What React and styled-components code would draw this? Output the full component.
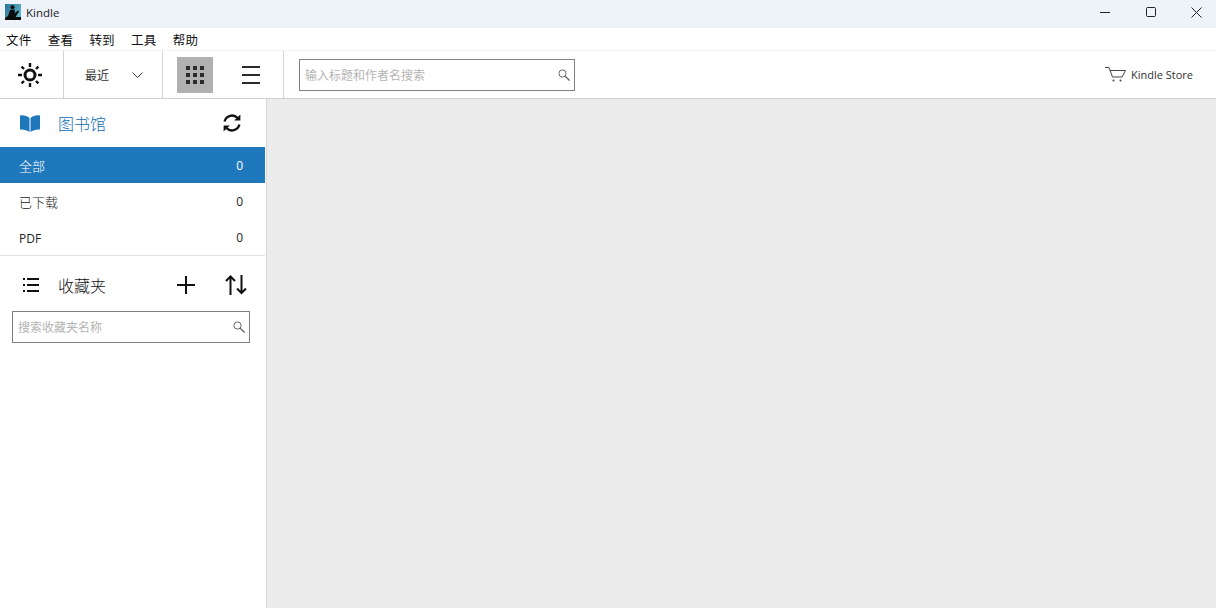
import React from 'react';
import styled, { createGlobalStyle } from 'styled-components';

const FONT = '"Open Sans", "Noto Sans CJK SC", sans-serif';

const GlobalStyle = createGlobalStyle`
  html, body {
    margin: 0;
    padding: 0;
    height: 100%;
    overflow: hidden;
    background: #fff;
  }
  * { box-sizing: border-box; }
  #root { height: 100%; }
`;

const Window = styled.div`
  width: 1216px;
  height: 608px;
  display: flex;
  flex-direction: column;
  font-family: ${FONT};
  color: #1a1a1a;
  background: #fff;
`;

const TitleBar = styled.div`
  height: 28px;
  flex: none;
  display: flex;
  align-items: center;
  background: #eef2f9;
  padding: 0 0 4px 5px;
`;

const AppName = styled.span`
  font-size: 11.5px;
  margin-left: 5px;
  color: #222;
`;

const WindowControls = styled.div`
  margin-left: auto;
  display: flex;
  gap: 5.5px;
  height: 100%;
`;

const WindowButton = styled.div`
  width: 40px;
  height: 100%;
  display: flex;
  align-items: center;
  justify-content: center;
  svg { display: block; }
`;

const MenuBar = styled.div`
  height: 23px;
  flex: none;
  display: flex;
  align-items: center;
  padding: 0 0 0 6px;
  gap: 16.3px;
  border-bottom: 1px solid #f0f0f0;
`;

const MenuItem = styled.span`
  font-size: 12.5px;
  color: #111;
  letter-spacing: 0.2px;
`;

const Toolbar = styled.div`
  height: 48px;
  flex: none;
  display: flex;
  align-items: center;
  border-bottom: 1px solid #d0d0d0;
`;

const ToolCell = styled.div`
  height: 100%;
  width: ${p => p.$width}px;
  flex: none;
  display: flex;
  align-items: center;
  justify-content: ${p => p.$justify || 'center'};
  padding-right: ${p => p.$inset || 0}px;
  border-right: 1px solid #d4d4d4;
`;

const SortLabel = styled.span`
  font-size: 12px;
  color: #333;
  margin-left: 21px;
  margin-right: 23px;
`;

const ViewButton = styled.div`
  width: 36px;
  height: 36px;
  margin-left: ${p => p.$offset}px;
  background: ${p => (p.$active ? '#b0b0b0' : 'transparent')};
  display: flex;
  align-items: center;
  justify-content: center;
`;

const SearchBox = styled.div`
  width: ${p => p.$width}px;
  height: 32px;
  flex: none;
  display: flex;
  align-items: center;
  justify-content: space-between;
  border: 1px solid #808080;
  padding: 0 4px 0 5px;
  background: #fff;
`;

const SearchHint = styled.span`
  font-size: 12px;
  color: #b4b4b4;
`;

const TopSearch = styled.div`
  margin-left: 15px;
`;

const Store = styled.div`
  margin-left: auto;
  margin-right: 23px;
  display: flex;
  align-items: center;
  gap: 5px;
  font-size: 11px;
  color: #333;
`;

const Body = styled.div`
  flex: 1;
  min-height: 0;
  display: flex;
`;

const Sidebar = styled.aside`
  width: 267px;
  flex: none;
  border-right: 1px solid #d8d8d8;
  padding-right: 1px;
  background: #fff;
  display: flex;
  flex-direction: column;
`;

const LibraryHeader = styled.div`
  height: 48px;
  display: flex;
  align-items: center;
  padding: 0 24px 0 20px;
`;

const HeaderTitle = styled.span`
  font-size: 16px;
  font-weight: 300;
  margin-left: ${p => p.$gap}px;
  color: ${p => p.$color};
`;

const HeaderEnd = styled.div`
  margin-left: auto;
  display: flex;
  align-items: center;
  gap: ${p => p.$gap || 0}px;
`;

const CategoryRow = styled.div`
  height: 36px;
  display: flex;
  align-items: center;
  justify-content: space-between;
  padding: 1px 22px 0 19px;
  font-size: 12px;
  background: ${p => (p.$selected ? '#1f78bc' : 'transparent')};
  color: ${p => (p.$selected ? '#fff' : '#222')};
`;

const CategoryName = styled.span`
  font-size: ${p => (p.$latin ? 12 : 13)}px;
  font-weight: ${p => (p.$latin ? 400 : 300)};
  padding-top: ${p => (p.$latin ? 1 : 0)}px;
`;

const Divider = styled.div`
  height: 1px;
  background: #e0e0e0;
`;

const CollectionHeader = styled.div`
  height: 55px;
  display: flex;
  align-items: center;
  padding: 2px 18px 0 23px;
`;

const CollectionSearch = styled.div`
  padding-left: 12px;
`;

const Main = styled.main`
  flex: 1;
  background: #ececec;
`;

const KindleLogo = () => (
  <svg width="16" height="16" viewBox="0 0 16 16">
    <defs>
      <linearGradient id="sky" x1="0" y1="0" x2="1" y2="0.6">
        <stop offset="0" stopColor="#2a6f96" />
        <stop offset="1" stopColor="#5fb4c8" />
      </linearGradient>
    </defs>
    <rect width="16" height="16" fill="url(#sky)" />
    <circle cx="7.5" cy="3.2" r="2" fill="#0b0b0b" />
    <path d="M5 6L9.5 5.5 10 9 13 6.5 14 7.5 10.5 13H16V16H0V14L3 12Z" fill="#0b0b0b" />
  </svg>
);

const SunIcon = () => (
  <svg width="24" height="24" viewBox="0 0 24 24" fill="none" stroke="#111" strokeWidth="2.4">
    <circle cx="12" cy="12" r="5" strokeWidth="3" />
    <path d="M12 0v4M12 20v4M0 12h4M20 12h4M3.6 3.6L6 6M18 18l2.4 2.4M3.6 20.4L6 18M18 6l2.4-2.4" />
  </svg>
);

const Chevron = () => (
  <svg width="11" height="6" viewBox="0 0 11 6" fill="none" stroke="#333" strokeWidth="1">
    <path d="M.5.5l5 5 5-5" />
  </svg>
);

const GridIcon = () => (
  <svg width="18" height="18" viewBox="0 0 18 18" fill="#2b2b2b">
    {[0, 7, 14].map(y =>
      [0, 7, 14].map(x => <rect key={`${x}-${y}`} x={x} y={y} width="4" height="4" />)
    )}
  </svg>
);

const ListIcon = () => (
  <svg width="18" height="18" viewBox="0 0 18 18" fill="#2b2b2b">
    <rect y="0" width="18" height="2" />
    <rect y="8" width="18" height="2" />
    <rect y="16" width="18" height="2" />
  </svg>
);

const SearchIcon = () => (
  <svg width="12" height="12" viewBox="0 0 12 12" fill="none" stroke="#666">
    <circle cx="4.5" cy="4.5" r="3.6" />
    <path d="M7.2 7.2L11.6 11.6" strokeWidth="1.3" />
  </svg>
);

const CartIcon = () => (
  <svg width="21" height="15" viewBox="0 0 21 15" fill="none" stroke="#444" strokeWidth="1">
    <path d="M0 .5h4l3.5 9.5h9.5L20.5 3.5H5" />
    <circle cx="8.5" cy="13.5" r="1" fill="#444" stroke="none" />
    <circle cx="15.5" cy="13.5" r="1" fill="#444" stroke="none" />
  </svg>
);

const BookIcon = () => (
  <svg width="20" height="17" viewBox="0 0 20 17" fill="#1f78bc">
    <path d="M0 .5C3.5 0 7 .8 9.5 3v14C7 15 3.5 14.2 0 14.5z" />
    <path d="M20 .5C16.5 0 13 .8 10.5 3v14c2.5-2 6-2.8 9.5-2.5z" />
  </svg>
);

const SyncIcon = () => (
  <svg width="18" height="18" viewBox="0 0 18 18" fill="none" stroke="#111" strokeWidth="2.3">
    <path d="M1.6 7.4A7.6 7.6 0 0 1 14.6 4" />
    <path d="M16.4 10.6A7.6 7.6 0 0 1 3.4 14" />
    <path d="M17.4 0.4v6.2h-6.2z" fill="#111" stroke="none" />
    <path d="M0.6 17.6v-6.2h6.2z" fill="#111" stroke="none" />
  </svg>
);

const BulletsIcon = () => (
  <svg width="16" height="14" viewBox="0 0 16 14" fill="#111">
    {[0, 6, 12].map(y => (
      <g key={y}>
        <rect y={y} width="2" height="2" />
        <rect x="4" y={y} width="12" height="2" />
      </g>
    ))}
  </svg>
);

const PlusIcon = () => (
  <svg width="18" height="18" viewBox="0 0 18 18" fill="#111">
    <rect y="8" width="18" height="2" />
    <rect x="8" width="2" height="18" />
  </svg>
);

const SortIcon = () => (
  <svg width="22" height="20" viewBox="0 0 22 20" fill="none" stroke="#111" strokeWidth="2">
    <path d="M5.5 20V2M1 6L5.5 1.5 10 6" />
    <path d="M16.5 0v18M12 13.5l4.5 4.5 4.5-4.5" />
  </svg>
);

const categories = [
  { name: '全部', count: 0, selected: true },
  { name: '已下载', count: 0 },
  { name: 'PDF', count: 0, latin: true },
];

const menus = ['文件', '查看', '转到', '工具', '帮助'];

export default function App() {
  return (
    <>
      <GlobalStyle />
      <Window>
        <TitleBar>
          <KindleLogo />
          <AppName>Kindle</AppName>
          <WindowControls>
            <WindowButton>
              <svg width="10" height="10" viewBox="0 0 10 10" stroke="#222"><path d="M0 5.5h10" /></svg>
            </WindowButton>
            <WindowButton>
              <svg width="10" height="10" viewBox="0 0 10 10" fill="none" stroke="#222"><rect x=".5" y=".5" width="9" height="9" rx="1" /></svg>
            </WindowButton>
            <WindowButton>
              <svg width="11" height="11" viewBox="0 0 11 11" stroke="#222"><path d="M.5.5l10 10M10.5.5l-10 10" /></svg>
            </WindowButton>
          </WindowControls>
        </TitleBar>
        <MenuBar>
          {menus.map(m => <MenuItem key={m}>{m}</MenuItem>)}
        </MenuBar>
        <Toolbar>
          <ToolCell $width={64} $inset={3}>
            <SunIcon />
          </ToolCell>
          <ToolCell $width={99} $justify="flex-start">
            <SortLabel>最近</SortLabel>
            <Chevron />
          </ToolCell>
          <ToolCell $width={121} $justify="flex-start">
            <ViewButton $active $offset={14}>
              <GridIcon />
            </ViewButton>
            <ViewButton $offset={20}>
              <ListIcon />
            </ViewButton>
          </ToolCell>
          <TopSearch>
            <SearchBox $width={276}>
              <SearchHint>输入标题和作者名搜索</SearchHint>
              <SearchIcon />
            </SearchBox>
          </TopSearch>
          <Store>
            <CartIcon />
            <span>Kindle Store</span>
          </Store>
        </Toolbar>
        <Body>
          <Sidebar>
            <LibraryHeader>
              <BookIcon />
              <HeaderTitle $gap={18} $color="#0f6cb3">图书馆</HeaderTitle>
              <HeaderEnd>
                <SyncIcon />
              </HeaderEnd>
            </LibraryHeader>
            {categories.map(c => (
              <CategoryRow key={c.name} $selected={c.selected}>
                <CategoryName $latin={c.latin}>{c.name}</CategoryName>
                <span>{c.count}</span>
              </CategoryRow>
            ))}
            <Divider />
            <CollectionHeader>
              <BulletsIcon />
              <HeaderTitle $gap={19} $color="#111">收藏夹</HeaderTitle>
              <HeaderEnd $gap={30}>
                <PlusIcon />
                <SortIcon />
              </HeaderEnd>
            </CollectionHeader>
            <CollectionSearch>
              <SearchBox $width={238}>
                <SearchHint>搜索收藏夹名称</SearchHint>
                <SearchIcon />
              </SearchBox>
            </CollectionSearch>
          </Sidebar>
          <Main />
        </Body>
      </Window>
    </>
  );
}
